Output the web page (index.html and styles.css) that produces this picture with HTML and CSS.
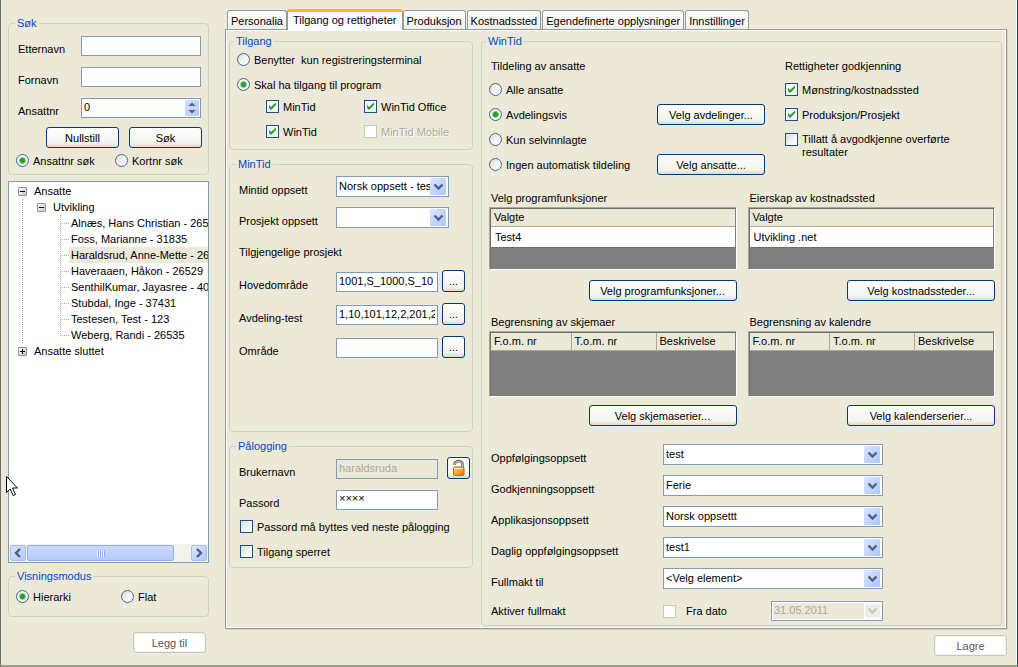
FILE: index.html
```html
<!DOCTYPE html>
<html lang="no">
<head>
<meta charset="utf-8">
<title>Ansatte</title>
<link rel="stylesheet" href="styles.css">
</head>
<body>
<div class="window">
  <aside class="side">
    <fieldset class="group search">
      <legend>Søk</legend>
      <div class="row"><label for="etternavn">Etternavn</label><input class="box" id="etternavn" type="text"></div>
      <div class="row"><label for="fornavn">Fornavn</label><input class="box" id="fornavn" type="text"></div>
      <div class="row"><label for="ansattnr">Ansattnr</label><input class="box spin" id="ansattnr" type="number" value="0"></div>
      <div class="buttons"><button class="btn">Nullstill</button><button class="btn">Søk</button></div>
      <div class="pair">
        <label class="opt"><input type="radio" name="sok" checked>Ansattnr søk</label>
        <label class="opt"><input type="radio" name="sok">Kortnr søk</label>
      </div>
    </fieldset>
    <div class="tree">
      <ul class="nodes">
        <li class="open"><span class="node"><i class="toggle"></i>Ansatte</span>
          <ul>
            <li><span class="node"><i class="toggle"></i>Utvikling</span>
              <ul class="leaves">
                <li><span>Alnæs, Hans Christian - 2652</span></li>
                <li><span>Foss, Marianne - 31835</span></li>
                <li><span class="selected">Haraldsrud, Anne-Mette - 265</span></li>
                <li><span>Haveraaen, Håkon - 26529</span></li>
                <li><span>SenthilKumar, Jayasree - 400</span></li>
                <li><span>Stubdal, Inge - 37431</span></li>
                <li><span>Testesen, Test - 123</span></li>
                <li><span>Weberg, Randi - 26535</span></li>
              </ul>
            </li>
          </ul>
        </li>
        <li><span class="node"><i class="toggle plus"></i>Ansatte sluttet</span></li>
      </ul>
      <div class="scrollbar">
        <button class="arrow" aria-label="Venstre"><svg width="8" height="10" viewBox="0 0 8 10"><path d="M6 1L2 5l4 4" fill="none" stroke="#4d6185" stroke-width="2.4"/></svg></button>
        <div class="track"><div class="thumb"><i></i><i></i><i></i><i></i></div></div>
        <button class="arrow" aria-label="Høyre"><svg width="8" height="10" viewBox="0 0 8 10"><path d="M2 1l4 4-4 4" fill="none" stroke="#4d6185" stroke-width="2.4"/></svg></button>
      </div>
    </div>
    <fieldset class="group mode">
      <legend>Visningsmodus</legend>
      <div class="pair">
        <label class="opt"><input type="radio" name="visning" checked>Hierarki</label>
        <label class="opt"><input type="radio" name="visning">Flat</label>
      </div>
    </fieldset>
    <button class="btn" disabled>Legg til</button>
  </aside>

  <main class="main">
    <nav class="tabs">
      <button class="tab">Personalia</button>
      <button class="tab active">Tilgang og rettigheter</button>
      <button class="tab">Produksjon</button>
      <button class="tab">Kostnadssted</button>
      <button class="tab">Egendefinerte opplysninger</button>
      <button class="tab">Innstillinger</button>
    </nav>
    <div class="panel">
      <div class="column">
        <fieldset class="group access">
          <legend>Tilgang</legend>
          <label class="opt"><input type="radio" name="tilgang">Benytter&nbsp; kun registreringsterminal</label>
          <label class="opt"><input type="radio" name="tilgang" checked>Skal ha tilgang til program</label>
          <div class="programs">
            <label class="opt"><input type="checkbox" checked>MinTid</label>
            <label class="opt"><input type="checkbox" checked>WinTid Office</label>
            <label class="opt"><input type="checkbox" checked>WinTid</label>
            <label class="opt off"><input type="checkbox" disabled>MinTid Mobile</label>
          </div>
        </fieldset>
        <fieldset class="group mintid">
          <legend>MinTid</legend>
          <div class="row"><label for="mintid">Mintid oppsett</label><select class="box" id="mintid"><option>Norsk oppsett - tes</option></select></div>
          <div class="row"><label for="prosjekt">Prosjekt oppsett</label><select class="box" id="prosjekt"><option></option></select></div>
          <p class="subhead">Tilgjengelige prosjekt</p>
          <div class="row"><label for="hoved">Hovedområde</label><input class="box" id="hoved" type="text" value="1001,S_1000,S_10"><button class="btn dots">...</button></div>
          <div class="row"><label for="avdeling">Avdeling-test</label><input class="box" id="avdeling" type="text" value="1,10,101,12,2,201,2"><button class="btn dots">...</button></div>
          <div class="row"><label for="omrade">Område</label><input class="box" id="omrade" type="text"><button class="btn dots">...</button></div>
        </fieldset>
        <fieldset class="group login">
          <legend>Pålogging</legend>
          <div class="row"><label for="bruker">Brukernavn</label><input class="box" id="bruker" type="text" value="haraldsruda" disabled><button class="btn lock" aria-label="Lås opp"><svg width="14" height="18" viewBox="0 0 14 18"><defs><linearGradient id="gold" x2="1" y2="1"><stop stop-color="#ffe08a"/><stop offset=".5" stop-color="#f7a823"/><stop offset="1" stop-color="#d97800"/></linearGradient></defs><path d="M2.500 6C2.500 1 10.500 1 10.500 5.500V9" fill="none" stroke="#70706c" stroke-width="2.800"/><path d="M2.500 6C2.500 1.500 10.500 1.500 10.500 5.500V9" fill="none" stroke="#d5d5cf" stroke-width="1"/><rect x="1.500" y="8" width="10.500" height="8.500" rx="1" fill="url(#gold)" stroke="#b86e0c"/><path d="M2.500 9.500h8.500" stroke="#ffe9a9"/></svg></button></div>
          <div class="row"><label for="passord">Passord</label><input class="box stars" id="passord" type="text" value="××××"></div>
          <label class="opt"><input type="checkbox">Passord må byttes ved neste pålogging</label>
          <label class="opt"><input type="checkbox">Tilgang sperret</label>
        </fieldset>
      </div>

      <fieldset class="group wintid">
        <legend>WinTid</legend>
        <div class="rights">
          <div class="assign">
            <p>Tildeling av ansatte</p>
            <label class="opt"><input type="radio" name="tildeling">Alle ansatte</label>
            <label class="opt"><input type="radio" name="tildeling" checked>Avdelingsvis</label>
            <label class="opt"><input type="radio" name="tildeling">Kun selvinnlagte</label>
            <label class="opt"><input type="radio" name="tildeling">Ingen automatisk tildeling</label>
          </div>
          <div class="picks"><button class="btn">Velg avdelinger...</button><button class="btn">Velg ansatte...</button></div>
          <div class="approve">
            <p>Rettigheter godkjenning</p>
            <label class="opt"><input type="checkbox" checked>Mønstring/kostnadssted</label>
            <label class="opt"><input type="checkbox" checked>Produksjon/Prosjekt</label>
            <label class="opt tall"><input type="checkbox">Tillatt å avgodkjenne overførte<br>resultater</label>
          </div>
        </div>
        <div class="lists">
          <section class="list">
            <p>Velg programfunksjoner</p>
            <div class="grid"><table><tr><th>Valgte</th></tr><tr><td>Test4</td></tr></table></div>
            <button class="btn">Velg programfunksjoner...</button>
          </section>
          <section class="list">
            <p>Eierskap av kostnadssted</p>
            <div class="grid"><table><tr><th>Valgte</th></tr><tr><td>Utvikling .net</td></tr></table></div>
            <button class="btn">Velg kostnadssteder...</button>
          </section>
          <section class="list">
            <p>Begrensning av skjemaer</p>
            <div class="grid"><table class="three"><tr><th>F.o.m. nr</th><th>T.o.m. nr</th><th>Beskrivelse</th></tr></table></div>
            <button class="btn">Velg skjemaserier...</button>
          </section>
          <section class="list">
            <p>Begrensning av kalendre</p>
            <div class="grid"><table class="three"><tr><th>F.o.m. nr</th><th>T.o.m. nr</th><th>Beskrivelse</th></tr></table></div>
            <button class="btn">Velg kalenderserier...</button>
          </section>
        </div>
        <div class="setup">
          <div class="row"><label for="s1">Oppfølgingsoppsett</label><select class="box" id="s1"><option>test</option></select></div>
          <div class="row"><label for="s2">Godkjenningsoppsett</label><select class="box" id="s2"><option>Ferie</option></select></div>
          <div class="row"><label for="s3">Applikasjonsoppsett</label><select class="box" id="s3"><option>Norsk oppsettt</option></select></div>
          <div class="row"><label for="s4">Daglig oppfølgingsoppsett</label><select class="box" id="s4"><option>test1</option></select></div>
          <div class="row"><label for="s5">Fullmakt til</label><select class="box" id="s5"><option>&lt;Velg element&gt;</option></select></div>
          <div class="row last"><label for="s6">Aktiver fullmakt</label><input type="checkbox" id="s6" disabled><label class="from" for="dato">Fra dato</label><select class="box date" id="dato" disabled><option>31.05.2011</option></select></div>
        </div>
      </fieldset>
    </div>
    <button class="btn save" disabled>Lagre</button>
  </main>
</div>
<svg class="pointer" width="13" height="21" viewBox="0 0 13 21"><path d="M.5.500v16l3.700-3.500 3 6.500 2.300-1-3-6.500h5z" fill="#fff" stroke="#000"/></svg>
</body>
</html>
```
FILE: styles.css
```css
* { box-sizing: border-box; }

body, p, ul, fieldset, legend, input, select, button { margin: 0; padding: 0; }

body, input, select, button {
  font: 11px/14px "Liberation Sans", Arial, sans-serif;
  color: #000;
}

body { background: #ece9d8; }

.window {
  display: flex;
  gap: 16px;
  min-height: 100vh;
  padding: 0 10px 0 7px;
  border-left: 1px solid #716f64;
  border-right: 1px solid #0b3cae;
  border-bottom: 2px solid #9d9b8e;
  box-shadow: inset -1px 0 #fff;
}

.side {
  flex: none;
  display: flex;
  flex-direction: column;
  width: 201px;
  padding: 16px 0 12px;
  gap: 6px;
}

.side > .btn { align-self: flex-end; width: 73px; margin: 9px 3px 0 0; }

/* Group boxes */
.group {
  min-width: 0;
  border: 1px solid #d0d0bf;
  border-radius: 4px;
  padding: 0 9px;
}

.group > legend {
  margin-left: -3px;
  padding: 0 2px;
  color: #0046d5;
}

.row { display: flex; align-items: flex-end; }
.row > label { flex: none; width: 97px; }

.box {
  flex: none;
  height: 20px;
  width: 102px;
  padding: 0 2px 2px;
  border: 1px solid #7f9db9;
  border-radius: 0;
  background: #fff;
  outline: 0;
}

.box:disabled { background-color: #ece9d8; color: #aca899; opacity: 1; }

select.box {
  appearance: none;
  height: 21px;
  width: 113px;
  padding-right: 18px;
  background: #fff url("data:image/svg+xml,%3Csvg xmlns='http://www.w3.org/2000/svg' width='16' height='17'%3E%3ClinearGradient id='a' x2='1' y2='1'%3E%3Cstop stop-color='%23dbe5fe'/%3E%3Cstop offset='1' stop-color='%23afc6fa'/%3E%3C/linearGradient%3E%3Crect width='16' height='17' rx='1' fill='url(%23a)'/%3E%3Cpath d='M4.500 6.500l4 4 4-4' fill='none' stroke='%234d6185' stroke-width='2.400'/%3E%3C/svg%3E") no-repeat right 2px top 1px;
}

.spin {
  appearance: textfield;
  background: #fff url("data:image/svg+xml,%3Csvg xmlns='http://www.w3.org/2000/svg' width='14' height='16'%3E%3ClinearGradient id='a' x2='1' y2='1'%3E%3Cstop stop-color='%23cfdcfd'/%3E%3Cstop offset='1' stop-color='%23b3c9fb'/%3E%3C/linearGradient%3E%3Crect width='14' height='16' rx='1' fill='url(%23a)'/%3E%3Cpath d='M0 8h14' stroke='%23dfe8fe'/%3E%3Cpath d='M3.500 6L7 2.500 10.500 6zM3.500 10L7 13.500 10.500 10z' fill='%234d6185'/%3E%3C/svg%3E") no-repeat right 1px top 1px;
}
.spin::-webkit-inner-spin-button { display: none; }

.btn {
  flex: none;
  height: 21px;
  border: 1px solid #003c74;
  border-radius: 3px;
  background: linear-gradient(#fff, #f3f3ef 80%, #dcd8cc);
  text-align: center;
}
.btn:disabled { border-color: #c9c7ba; background: #fff; box-shadow: inset 0 0 0 1px #f5f4ea; color: #555; }

/* Radio buttons and tick boxes */
.opt { display: flex; flex: none; align-items: center; height: 13px; gap: 4px; white-space: nowrap; }

input[type="radio"], input[type="checkbox"] {
  appearance: none;
  flex: none;
  width: 13px;
  height: 13px;
  border: 1px solid #1c5180;
  background: linear-gradient(135deg, #dcdcd7, #fff 80%);
}
input[type="radio"] { border-radius: 50%; border-color: #3c6690; }
input[type="radio"]:checked { background: radial-gradient(circle, #21a121 0 2px, #8fd08f 3px, #f4f4f1 4px); }
input[type="checkbox"]:checked {
  background: #f6f6f3 url("data:image/svg+xml,%3Csvg xmlns='http://www.w3.org/2000/svg' width='11' height='11'%3E%3Cpath d='M2 4v3l2 2 5-5V1.500L4 6z' fill='%2321a121'/%3E%3C/svg%3E");
}
input[type="checkbox"]:disabled { border-color: #cac8bb; background: #fff; }
.off { color: #aca899; text-shadow: 1px 1px #fff; }

/* Search */
.search { display: flex; flex-direction: column; height: 159px; }
.search .row { margin: 6px 0 5px; }
.search .row > label { width: 63px; }
.search .box { width: 120px; }
.buttons { display: flex; justify-content: flex-end; gap: 10px; margin: 4px -3px 6px 0; }
.buttons .btn { width: 73px; }
.pair { display: flex; margin-left: -2px; }
.pair .opt { width: 99px; }
.pair .opt + .opt { width: auto; }
.mode .pair { padding: 7px 0 13px; }
.mode .opt:first-child { width: 105px; }

/* Employee tree */
.tree {
  flex: 1;
  display: flex;
  flex-direction: column;
  justify-content: space-between;
  overflow: hidden;
  border: 1px solid #7f9db9;
  background: #fff;
}
.nodes { padding: 1px 0 0 9px; line-height: 16px; white-space: nowrap; }
.tree ul { list-style: none; }
.node { display: flex; align-items: center; height: 16px; }
.toggle {
  width: 9px;
  height: 9px;
  margin-right: 7px;
  border: 1px solid #7898b5;
  border-radius: 1px;
  background: linear-gradient(#000, #000) center / 5px 1px no-repeat, linear-gradient(135deg, #fff, #c9c3b5);
}
.plus { background: linear-gradient(#000, #000) center / 5px 1px no-repeat, linear-gradient(#000, #000) center / 1px 5px no-repeat, linear-gradient(135deg, #fff, #c9c3b5); }
.open > ul { margin-left: 4px; padding-left: 14px; border-left: 1px dotted #aca899; }
.leaves { margin-left: 23px; }
.leaves li { position: relative; display: flex; height: 16px; padding-left: 9px; }
.leaves li::before { content: ""; position: absolute; left: 0; top: 0; width: 8px; height: 8px; border-left: 1px dotted #aca899; border-bottom: 1px dotted #aca899; }
.leaves li:not(:last-child)::after { content: ""; position: absolute; left: 0; top: 8px; height: 8px; border-left: 1px dotted #aca899; }
.leaves span { flex: 1; padding-left: 2px; }
.selected { background: #ece9d8; }

.scrollbar { display: flex; gap: 1px; padding: 1px; background: #f3f2ec; }
.arrow {
  display: grid;
  place-items: center;
  flex: none;
  width: 16px;
  height: 16px;
  border: 1px solid #a9bff0;
  border-radius: 2px;
  background: linear-gradient(135deg, #dbe5fe, #b3c9fb);
}
.track { flex: 1; }
.thumb {
  display: flex;
  align-items: center;
  justify-content: center;
  gap: 1px;
  width: 90%;
  height: 16px;
  border: 1px solid #98b0e8;
  border-radius: 2px;
  background: linear-gradient(#cbdafd, #b7cbf9);
}
.thumb i { width: 1px; height: 7px; background: #eef4fe; box-shadow: 1px 0 #8cb0f8; }

/* Tabs */
.main { flex: 1; display: flex; flex-direction: column; min-width: 0; padding: 9px 0; }
.tabs { display: flex; align-items: flex-end; height: 20px; padding-left: 2px; gap: 1px; }
.tab {
  height: 19px;
  padding: 1px 3px 0;
  border: 1px solid #919b9c;
  border-bottom: 0;
  border-radius: 3px 3px 0 0;
  background: linear-gradient(#fff, #f0f0ea);
  white-space: nowrap;
}
.tab.active {
  position: relative;
  height: 21px;
  margin: 0 -1px -1px;
  padding: 0 5px 2px;
  border-top: 3px solid #ffb52a;
  background: #fcfcfe;
}
.panel {
  flex: 1;
  display: flex;
  gap: 8px;
  padding: 4px 4px 2px 3px;
  border: 1px solid #919b9c;
  box-shadow: inset 0 0 0 1px #fff, 1px 1px #d5d2c2;
}
.save { align-self: flex-end; width: 73px; margin-top: 6px; }

.column { flex: none; width: 244px; display: flex; flex-direction: column; gap: 7px; }

.access { height: 116px; padding-left: 7px; }
.access > .opt { margin: 5px 0 12px; }
.access > .opt + .opt { margin-bottom: 9px; }
.programs { display: grid; grid-template-columns: 98px 1fr; row-gap: 12px; padding-left: 29px; }

.mintid { height: 275px; padding-top: 5px; }
.mintid .row { margin-bottom: 10px; }
.subhead { margin: 17px 0 11px; }
.mintid .subhead ~ .row { margin-bottom: 11px; }
.dots, .lock { width: 23px; height: 22px; margin-left: 4px; }
.lock { display: grid; place-items: center; margin-left: 9px; }

.login { height: 129px; padding-top: 4px; }
.login .row { margin-bottom: 10px; }
.login .row + .row { margin: 11px 0 10px; }
.login .opt { margin: 0 0 12px 1px; }
.stars { padding-bottom: 5px; }

/* WinTid */
.wintid { flex: 1; padding: 0 6px 0 7px; }
.rights { display: grid; grid-template-columns: 168px 108px auto; justify-content: start; padding-top: 11px; }
.assign, .approve { display: flex; flex-direction: column; gap: 12px; }
.assign p, .approve p { margin-bottom: -2px; }
.assign p { padding-left: 2px; }
.picks { display: flex; flex-direction: column; gap: 29px; padding-top: 45px; }
.approve { padding-left: 20px; }
.tall { align-items: flex-start; line-height: 13px; }

.lists { display: grid; grid-template-columns: 1fr 1fr; gap: 14px 11px; margin-top: 16px; }
.list { display: flex; flex-direction: column; }
.list p { padding-left: 2px; margin-bottom: 2px; }
.list .btn { align-self: flex-end; width: 148px; margin-top: 10px; }
.grid {
  height: 63px;
  border: 1px solid;
  border-color: #aca899 #fff #fff #aca899;
  background: #808080;
  box-shadow: inset 1px 1px #716f64;
  padding: 1px 1px 0;
}
.grid table { width: 100%; border-collapse: collapse; table-layout: fixed; }
.grid th { height: 17px; padding: 0 3px; background: #ece9d8; border-bottom: 1px solid #aca899; font-weight: 400; text-align: left; }
.grid td { height: 21px; padding: 0 4px; background: #fff; border-bottom: 1px solid #716f64; }
.three th + th { border-left: 1px solid #aca899; }
.three th:nth-child(1) { width: 80px; }
.three th:nth-child(2) { width: 85px; }
.list:nth-child(n + 3) .grid { height: 66px; }
.list:nth-child(n + 3) .btn { margin-top: 8px; }

.setup { display: flex; flex-direction: column; gap: 10px; padding: 18px 0 4px 2px; }
.setup .row > label { width: 172px; }
.setup select.box { width: 220px; }
.setup .last { align-items: center; height: 20px; margin-top: 2px; }
.setup .row > .from { width: 85px; margin-left: 10px; }
.setup select.date {
  width: 112px;
  height: 20px;
  box-shadow: inset 0 0 0 1px #fff;
  background: #ece9d8 url("data:image/svg+xml,%3Csvg xmlns='http://www.w3.org/2000/svg' width='18' height='18'%3E%3Cpath d='M0 0h18v18H0z' fill='%23fff'/%3E%3Crect x='1' y='2' width='15' height='14' rx='1' fill='%23efeee6'/%3E%3Cpath d='M4.500 6.500l4 4 4-4' fill='none' stroke='%23c9c7ba' stroke-width='2.400'/%3E%3C/svg%3E") no-repeat right top;
}

.pointer { position: absolute; left: 6px; top: 476px; }
```
